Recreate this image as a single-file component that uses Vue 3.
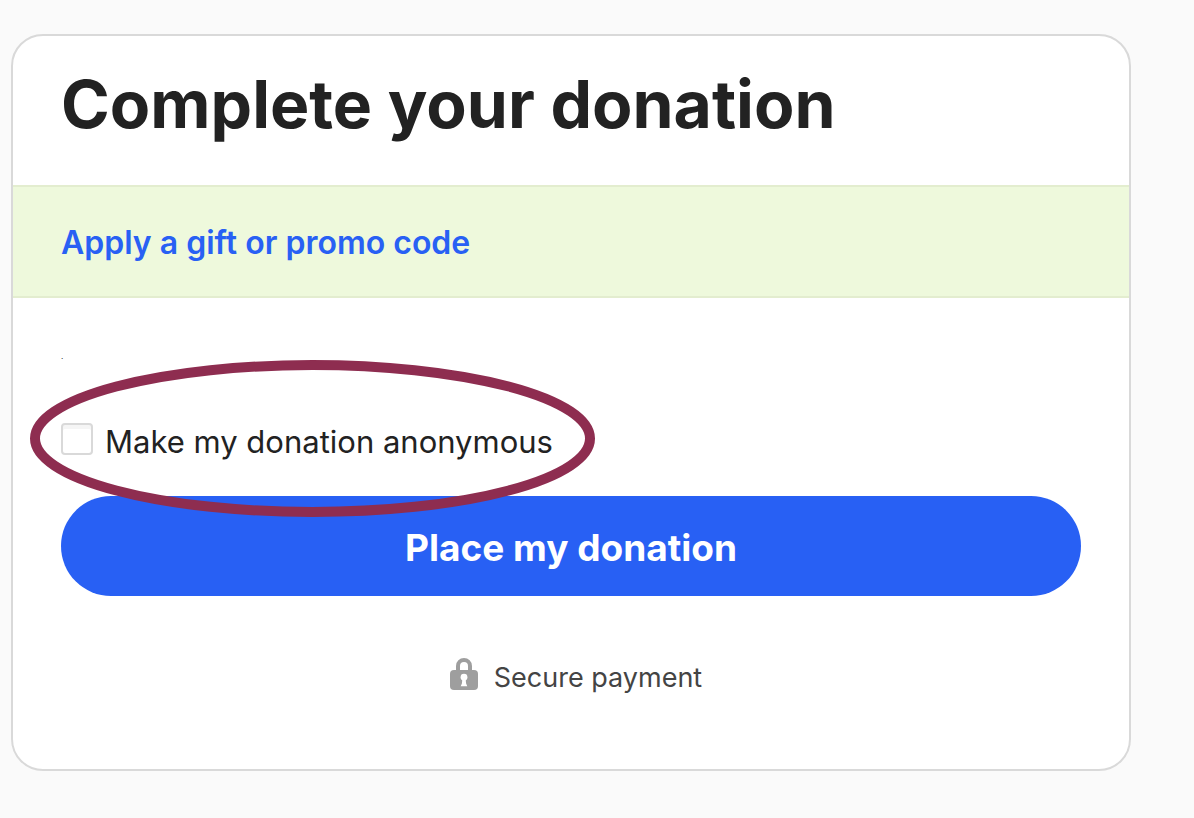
<script setup>
import { ref } from 'vue'

const anonymous = ref(false)
</script>

<template>
  <main class="page">
    <section class="card">
      <h1 class="title">Complete your donation</h1>
      <div class="promo">
        <a href="#promo" class="promo-link">Apply a gift or promo code</a>
      </div>
      <form class="body" @submit.prevent>
        <p class="note">.</p>
        <div class="option">
          <input id="anonymous" v-model="anonymous" class="check" type="checkbox" />
          <label for="anonymous" class="option-label">Make my donation anonymous</label>
          <svg class="ring" viewBox="0 0 565 157" aria-hidden="true">
            <ellipse cx="282.5" cy="78.5" rx="277.5" ry="73.5" />
          </svg>
        </div>
        <button class="submit" type="submit">Place my donation</button>
        <p class="secure">
          <svg class="lock" viewBox="0 0 28 32" aria-hidden="true">
            <path class="shackle" d="M8 13V8a6 6 0 0 1 12 0v5" />
            <rect class="shell" x="0" y="12" width="28" height="20" rx="4" />
            <circle class="hole" cx="14" cy="19.2" r="3.4" />
            <path class="hole" d="M12.5 20h3l.6 5.5 1.2 2.7h-6.6l1.2-2.7z" />
          </svg>
          <span>Secure payment</span>
        </p>
      </form>
    </section>
  </main>
</template>

<style>
body {
  background: #fafafa;
}
</style>

<style scoped>
.page {
  padding: 34px 63px 47px 11px;
  font-family: Inter, "Liberation Sans", sans-serif;
  color: #222;
}
.card {
  border: 2px solid #d9d9d9;
  border-radius: 32px;
  background: #fff;
  overflow: hidden;
}
.title {
  margin: 0;
  padding: 28px 48px 41px;
  font-size: 66px;
  line-height: 80px;
  font-weight: 700;
}
.promo {
  padding: 38px 48px 35px;
  border-top: 2px solid #e3edcf;
  border-bottom: 2px solid #e3edcf;
  background: #eef9dc;
}
.promo-link {
  display: block;
  font-size: 32px;
  line-height: 36px;
  font-weight: 600;
  color: #2860f4;
  text-decoration: none;
}
.body {
  padding: 52px 48px 72px;
}
.note {
  margin: 0;
  font-size: 8px;
  line-height: 12px;
}
.option {
  position: relative;
  display: flex;
  align-items: center;
  gap: 12px;
  margin-top: 57px;
  height: 40px;
}
.option-label {
  padding-top: 6px;
  font-size: 31px;
  line-height: 40px;
}
.check {
  appearance: none;
  flex: none;
  width: 32px;
  height: 32px;
  margin: 0;
  border: 2px solid #d9d9d9;
  border-radius: 4px;
  background: #fff;
  box-shadow: inset 0 4px 0 #f5f5f5;
}
.check:checked {
  background: #2860f4;
  box-shadow: none;
}
.ring {
  position: absolute;
  left: -31px;
  top: -59px;
  width: 565px;
  height: 157px;
  pointer-events: none;
}
.ring ellipse {
  fill: none;
  stroke: #8e2d50;
  stroke-width: 10;
}
.submit {
  display: block;
  width: 100%;
  height: 100px;
  margin-top: 37px;
  padding: 2px 0 0;
  border: 0;
  border-radius: 50px;
  background: #2860f4;
  color: #fff;
  font-family: inherit;
  font-size: 37px;
  font-weight: 700;
}
.secure {
  display: flex;
  justify-content: center;
  align-items: flex-start;
  gap: 16px;
  margin: 62px 0 0;
  padding-left: 10px;
  font-size: 27px;
  line-height: 39px;
  color: #444;
}
.lock {
  width: 28px;
  height: 32px;
}
.shackle {
  fill: none;
  stroke: #9e9e9e;
  stroke-width: 4;
}
.shell {
  fill: #9e9e9e;
}
.hole {
  fill: #fff;
}
</style>
